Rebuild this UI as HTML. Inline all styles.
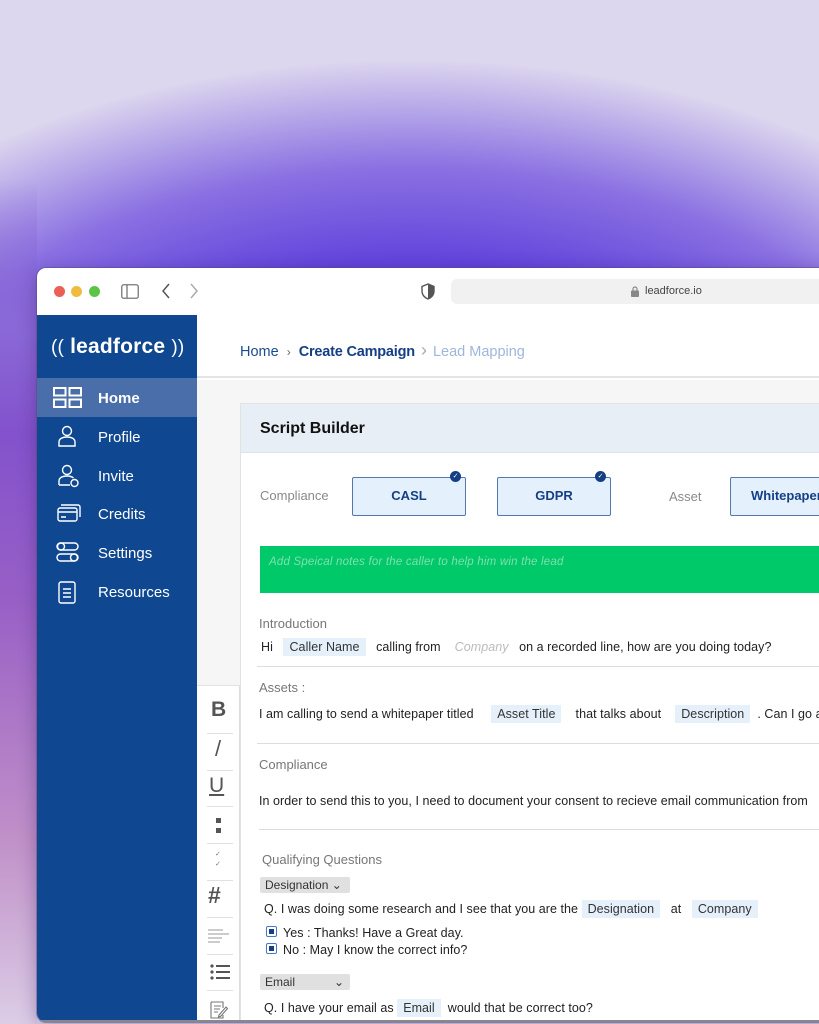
<!DOCTYPE html>
<html><head><meta charset="utf-8"><style>
*{margin:0;padding:0;box-sizing:border-box}
body{width:819px;height:1024px;overflow:hidden;position:relative;font-family:"Liberation Sans",sans-serif;
background:radial-gradient(ellipse 720px 450px at 410px 510px,#5f3fdc 0%,#6244dc 55%,#8a70e2 76%,#dcd6ee 100%) #dfdaee}
.a{position:absolute;white-space:nowrap}
.lstrip{left:0;top:180px;width:37px;height:844px;background:linear-gradient(180deg,rgba(138,104,214,0) 0%,#8a68d6 18%,#8352cc 30%,#9860c6 50%,#c090c8 78%,#dccde6 100%)}
.win{left:37px;top:268px;width:800px;height:754px;background:#fff;border-radius:9px 0 0 9px;overflow:hidden;box-shadow:0 0 0 1px rgba(90,70,120,.45),0 4px 18px rgba(40,20,90,.35)}
.side{left:0;top:47px;width:160px;height:720px;background:#0f4890}
.nav{color:#fff;font-size:15px}
.t{font-family:"Liberation Sans",sans-serif}
.g{color:#8a8a8a}
.chip{background:#e5f0fb;padding:2px 6px;color:#333}
.sm{font-size:12.5px;color:#222;letter-spacing:.05px}
</style></head><body>
<div class="a lstrip"></div>
<div class="a win">
  <div class="a" style="left:17px;top:18px;width:11px;height:11px;border-radius:50%;background:#ec5f57"></div>
  <div class="a" style="left:34px;top:18px;width:11px;height:11px;border-radius:50%;background:#f1bb40"></div>
  <div class="a" style="left:52px;top:18px;width:11px;height:11px;border-radius:50%;background:#5ec448"></div>
  <svg class="a" style="left:84px;top:16px" width="18" height="15" viewBox="0 0 18 15"><rect x="0.75" y="0.75" width="16.5" height="13.5" rx="2" fill="none" stroke="#777" stroke-width="1.3"/><line x1="6" y1="1" x2="6" y2="14" stroke="#777" stroke-width="1.3"/></svg>
  <svg class="a" style="left:124px;top:15px" width="10" height="16"><path d="M8 1L2 8L8 15" fill="none" stroke="#555" stroke-width="1.5"/></svg>
  <svg class="a" style="left:152px;top:15px" width="10" height="16"><path d="M2 1L8 8L2 15" fill="none" stroke="#aaa" stroke-width="1.5"/></svg>
  <svg class="a" style="left:384px;top:15px" width="14" height="17"><path d="M7 1L1 3.5V8C1 12 4 15 7 16C10 15 13 12 13 8V3.5Z" fill="#fff" stroke="#555" stroke-width="1.4"/><path d="M7 1L13 3.5V8C13 12 10 15 7 16Z" fill="#555"/></svg>
  <div class="a" style="left:414px;top:11px;width:400px;height:25px;background:#f1f1f2;border-radius:6px"></div>
  <svg class="a" style="left:594px;top:18px" width="8" height="11"><rect x="0" y="4.5" width="8" height="6.5" rx="1" fill="#888"/><path d="M2 5V3a2 2 0 0 1 4 0v2" fill="none" stroke="#888" stroke-width="1.2"/></svg>
  <div class="a t" style="left:608px;top:17px;font-size:11px;color:#444">leadforce.io</div>

  <div class="a side">
    <div class="a" style="left:14px;top:20px;color:#fff;font-size:21px;font-weight:bold;letter-spacing:.2px"><span style="font-weight:normal;font-size:19px">((</span> leadforce <span style="font-weight:normal;font-size:19px">))</span></div>
    <div class="a" style="left:0;top:63px;width:160px;height:39px;background:#4a6eaa"></div>
    <svg class="a" style="left:16px;top:72px" width="29" height="21" fill="none" stroke="#fff" stroke-width="2"><rect x="1" y="1" width="11.5" height="7.5"/><rect x="16.5" y="1" width="11.5" height="7.5"/><rect x="1" y="12.5" width="11.5" height="7.5"/><rect x="16.5" y="12.5" width="11.5" height="7.5"/></svg>
    <div class="a nav" style="left:61px;top:75px;font-weight:bold">Home</div>
    <svg class="a" style="left:21px;top:110px" width="18" height="22" fill="none" stroke="#fff" stroke-width="1.4"><circle cx="9" cy="6" r="4.5"/><path d="M1 21V17c0-3 3-5 8-5s8 2 8 5v4z"/></svg>
    <div class="a nav" style="left:61px;top:114px">Profile</div>
    <svg class="a" style="left:21px;top:149px" width="22" height="24" fill="none" stroke="#fff" stroke-width="1.4"><circle cx="9" cy="6" r="4.5"/><path d="M1 21V17c0-3 3-5 8-5 3 0 5 .7 6.5 2M1 21h11"/><circle cx="16.5" cy="19" r="3.5"/></svg>
    <div class="a nav" style="left:61px;top:153px">Invite</div>
    <svg class="a" style="left:20px;top:189px" width="24" height="18" fill="none" stroke="#fff" stroke-width="1.4"><rect x="1" y="4" width="19" height="13" rx="2"/><path d="M4 1h17a2 2 0 0 1 2 2v10M1 8h19M4 13h5"/></svg>
    <div class="a nav" style="left:61px;top:191px">Credits</div>
    <svg class="a" style="left:19px;top:227px" width="23" height="21" fill="none" stroke="#fff" stroke-width="1.4"><rect x="1" y="1" width="21" height="7" rx="3.5"/><circle cx="5" cy="4.5" r="3.5"/><rect x="1" y="12" width="21" height="7" rx="3.5"/><circle cx="18" cy="15.5" r="3.5"/></svg>
    <div class="a nav" style="left:61px;top:230px">Settings</div>
    <svg class="a" style="left:21px;top:266px" width="18" height="23" fill="none" stroke="#fff" stroke-width="1.4"><rect x="1" y="1" width="16" height="21" rx="2"/><path d="M5 8h8M5 12h8M5 16h8"/></svg>
    <div class="a nav" style="left:61px;top:269px">Resources</div>
  </div>

  <div class="a" style="left:160px;top:47px;width:640px;height:63px;background:#fff;border-bottom:2px solid #e4e4e4"></div>
  <div class="a t" style="left:203px;top:72px;font-size:14.5px;color:#1a4a90">Home<span style="color:#666;font-size:12px;margin:0 8px">&#8250;</span><b style="color:#153f85;letter-spacing:-.2px">Create Campaign</b><span style="color:#aab;font-size:18px;margin:0 6px">&#8250;</span><span style="color:#9fb6db">Lead Mapping</span></div>
  <div class="a" style="left:160px;top:112px;width:640px;height:660px;background:#f6f6f6"></div>
  <div class="a" style="left:160px;top:417px;width:43px;height:340px;background:#fff;border-top:1px solid #e2e2e2;border-right:1px solid #ddd"></div>
  <div class="a" style="left:174px;top:430px;font-size:21px;font-weight:bold;color:#555">B</div>
  <div class="a" style="left:170px;top:465px;width:26px;border-top:1px solid #e0e0e0"></div>
  <div class="a" style="left:178px;top:468px;font-size:22px;color:#555">/</div>
  <div class="a" style="left:170px;top:502px;width:26px;border-top:1px solid #e0e0e0"></div>
  <div class="a" style="left:172px;top:506px;font-size:21px;color:#555;text-decoration:underline">U</div>
  <div class="a" style="left:170px;top:538px;width:26px;border-top:1px solid #e0e0e0"></div>
  <div class="a" style="left:179px;top:550px;width:5px;height:5px;background:#555"></div><div class="a" style="left:179px;top:560px;width:5px;height:5px;background:#555"></div>
  <div class="a" style="left:170px;top:575px;width:26px;border-top:1px solid #e0e0e0"></div>
  <div class="a" style="left:178px;top:582px;font-size:7px;color:#777;line-height:10px;white-space:normal">&#10003;<br>&#10003;</div>
  <div class="a" style="left:170px;top:612px;width:26px;border-top:1px solid #e0e0e0"></div>
  <div class="a" style="left:171px;top:614px;font-size:23px;color:#555;font-weight:bold">#</div>
  <div class="a" style="left:170px;top:649px;width:26px;border-top:1px solid #e0e0e0"></div>
  <svg class="a" style="left:170px;top:660px" width="22" height="16" stroke="#999" stroke-width="1"><path d="M1 2h15M1 6h21M1 10h14M1 14h12" /></svg>
  <div class="a" style="left:170px;top:686px;width:26px;border-top:1px solid #e0e0e0"></div>
  <svg class="a" style="left:173px;top:696px" width="20" height="16" fill="#555"><circle cx="2" cy="2" r="1.6"/><circle cx="2" cy="8" r="1.6"/><circle cx="2" cy="14" r="1.6"/><rect x="6" y="1" width="14" height="2"/><rect x="6" y="7" width="14" height="2"/><rect x="6" y="13" width="14" height="2"/></svg>
  <div class="a" style="left:170px;top:722px;width:26px;border-top:1px solid #e0e0e0"></div>
  <svg class="a" style="left:173px;top:733px" width="18" height="18" fill="none" stroke="#777" stroke-width="1.1"><path d="M1 1h12v6M1 1v16h12v-3M4 5h7M4 8h6M4 11h4M9 14l7-8 1.5 1.5-7 8-2 .5z"/></svg>

  <div class="a" style="left:203px;top:135px;width:600px;height:640px;background:#fff;border:1px solid #e2e2e2"></div>
  <div class="a" style="left:204px;top:136px;width:600px;height:49px;background:#e8eef6;border-bottom:1px solid #dde3ea"></div>
  <div class="a t" style="left:223px;top:152px;font-size:16px;font-weight:bold;color:#111">Script Builder</div>

  <div class="a t g" style="left:223px;top:220px;font-size:13px">Compliance</div>
  <div class="a t" style="left:315px;top:209px;width:114px;height:39px;background:#e5f0fd;border:1.5px solid #5577aa;border-radius:2px;text-align:center;line-height:36px;font-size:13px;font-weight:bold;color:#153f85">CASL</div>
  <div class="a" style="left:413px;top:203px;width:11px;height:11px;border-radius:50%;background:#153f85;color:#fff;font-size:7px;text-align:center;line-height:11px">&#10003;</div>
  <div class="a t" style="left:460px;top:209px;width:114px;height:39px;background:#e5f0fd;border:1.5px solid #5577aa;border-radius:2px;text-align:center;line-height:36px;font-size:13px;font-weight:bold;color:#153f85">GDPR</div>
  <div class="a" style="left:558px;top:203px;width:11px;height:11px;border-radius:50%;background:#153f85;color:#fff;font-size:7px;text-align:center;line-height:11px">&#10003;</div>
  <div class="a t g" style="left:632px;top:221px;font-size:13px">Asset</div>
  <div class="a t" style="left:693px;top:209px;width:120px;height:39px;background:#e5f0fd;border:1.5px solid #5577aa;border-radius:2px;line-height:36px;padding-left:20px;font-size:13px;font-weight:bold;color:#153f85">Whitepaper</div>

  <div class="a" style="left:223px;top:278px;width:590px;height:47px;background:#00c96a"></div>
  <div class="a t" style="left:232px;top:288px;font-size:11.5px;font-style:italic;color:#7fe0ad;letter-spacing:.2px">Add Speical notes for the caller to help him win the lead</div>

  <div class="a t g" style="left:222px;top:348px;font-size:13px;color:#777">Introduction</div>
  <div class="a t sm" style="left:224px;top:372px">Hi &nbsp;&nbsp;<span class="chip">Caller Name</span> &nbsp;&nbsp;calling from &nbsp;&nbsp;&nbsp;<i style="color:#bbb">Company</i> &nbsp;&nbsp;on a recorded line, how are you doing today?</div>
  <div class="a" style="left:220px;top:398px;width:600px;border-top:1.5px solid #ddd"></div>

  <div class="a t g" style="left:222px;top:412px;font-size:13px;color:#777">Assets :</div>
  <div class="a t sm" style="left:222px;top:439px">I am calling to send a whitepaper titled &nbsp;&nbsp;&nbsp;&nbsp;<span class="chip">Asset Title</span> &nbsp;&nbsp;&nbsp;that talks about &nbsp;&nbsp;&nbsp;<span class="chip">Description</span> &nbsp;. Can I go a</div>
  <div class="a" style="left:220px;top:475px;width:600px;border-top:1.5px solid #ddd"></div>

  <div class="a t g" style="left:222px;top:489px;font-size:13px;color:#777">Compliance</div>
  <div class="a t sm" style="left:222px;top:526px">In order to send this to you, I need to document your consent to recieve email communication from</div>
  <div class="a" style="left:222px;top:561px;width:600px;border-top:1.5px solid #ddd"></div>

  <div class="a t g" style="left:225px;top:584px;font-size:13px;color:#777">Qualifying Questions</div>
  <div class="a t sm" style="left:223px;top:609px;width:90px;height:16px;background:#e0e0e0;border-radius:2px;padding:1px 5px;color:#333;letter-spacing:0;font-size:12px">Designation &#8964;</div>
  <div class="a t sm" style="left:227px;top:634px">Q. I was doing some research and I see that you are the <span class="chip">Designation</span> &nbsp;&nbsp;at &nbsp;&nbsp;<span class="chip">Company</span></div>
  <div class="a" style="left:229px;top:658px;width:11px;height:11px;border:1.5px solid #4a78c0;border-radius:2px;padding:1.5px"><div style="width:5px;height:5px;background:#153f85"></div></div>
  <div class="a t sm" style="left:246px;top:658px">Yes : Thanks! Have a Great day.</div>
  <div class="a" style="left:229px;top:675px;width:11px;height:11px;border:1.5px solid #4a78c0;border-radius:2px;padding:1.5px"><div style="width:5px;height:5px;background:#153f85"></div></div>
  <div class="a t sm" style="left:246px;top:675px">No : May I know the correct info?</div>
  <div class="a t sm" style="left:223px;top:706px;width:90px;height:16px;background:#e0e0e0;border-radius:2px;padding:1px 5px;color:#333;letter-spacing:0;font-size:12px">Email<span style="position:absolute;left:74px">&#8964;</span></div>
  <div class="a t sm" style="left:227px;top:733px">Q. I have your email as <span class="chip">Email</span> &nbsp;would that be correct too?</div>
  <div class="a" style="left:0;top:752px;width:800px;height:2px;background:#888"></div>
</div>
</body></html>
